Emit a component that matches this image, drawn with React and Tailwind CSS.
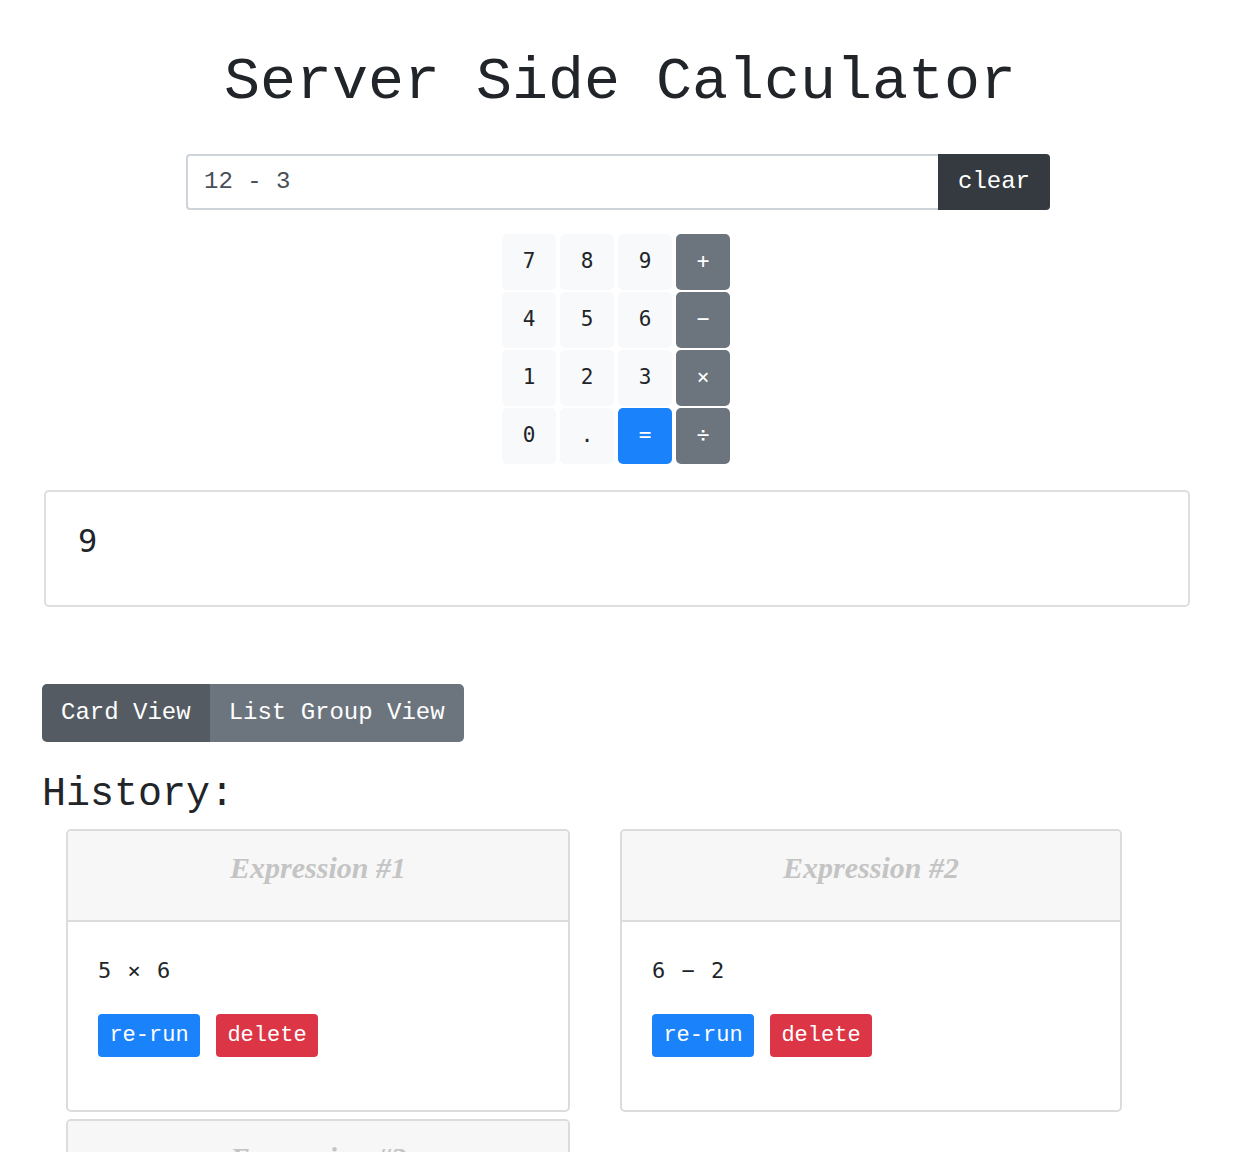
const MONO = "font-['Liberation_Mono','Courier_New',monospace]";
const DJ = "font-['DejaVu_Sans_Mono',monospace]";

const keys = [
  ["7", "8", "9", "+"],
  ["4", "5", "6", "−"],
  ["1", "2", "3", "×"],
  ["0", ".", "=", "÷"],
];
const cards = [
  { n: 1, expr: "5 × 6", w: "w-[504px]" },
  { n: 2, expr: "6 − 2", w: "w-[502px]" },
  { n: 3, expr: "9 + 1", w: "w-[504px]" },
];

function Key({ k, col }) {
  const isEq = k === "=";
  const isOp = col === 3;
  const cls = isEq
    ? "bg-[#1a82fb] text-white"
    : isOp
    ? "bg-[#6c757d] text-white"
    : "bg-[#f8f9fa] text-[#212529]";
  return (
    <div className={`flex items-center justify-center rounded-[5px] text-[21px] font-['DejaVu_Sans_Mono',monospace] ${cls}`}>
      {k}
    </div>
  );
}

export default function App() {
  return (
    <div className="w-[1240px] min-h-[1152px] bg-white text-[#212529] overflow-hidden">
      <h1 className={`text-center text-[60px] leading-[1.2] pt-[46px] text-[#212529] ${MONO}`}>
        Server Side Calculator
      </h1>

      <div className="flex ml-[186px] w-[864px] h-[56px] mt-[36px]">
        <div className={`flex-1 flex items-center border-2 border-[#ced4da] border-r-0 rounded-l-[4px] pl-[16px] text-[24px] text-[#495057] ${MONO}`}>
          12 - 3
        </div>
        <button className={`w-[112px] bg-[#343a40] text-white text-[24px] rounded-r-[4px] ${MONO}`}>
          clear
        </button>
      </div>

      <div className="ml-[502px] mt-[24px] grid grid-cols-[repeat(4,54px)] grid-rows-[repeat(4,56px)] gap-x-[4px] gap-y-[2px] w-[228px]">
        {keys.flat().map((k, i) => (
          <Key key={i} k={k} col={i % 4} />
        ))}
      </div>

      <div className={`ml-[44px] w-[1146px] h-[117px] mt-[26px] border-2 border-[#dedede] rounded-[5px] px-[32px] pt-[25px] text-[32px] leading-[1.5] text-[#212529] ${DJ}`}>
        9
      </div>

      <div className={`flex ml-[42px] mt-[77px] h-[58px] w-fit rounded-[5px] overflow-hidden text-white text-[24px] ${MONO}`}>
        <div className="bg-[#545b62] px-[19px] flex items-center">Card View</div>
        <div className="bg-[#6c757d] px-[19px] flex items-center">List Group View</div>
      </div>

      <h2 className={`ml-[42px] mt-[29px] text-[40px] leading-[1.2] text-[#212529] ${MONO}`}>
        History:
      </h2>

      <div className="ml-[66px] mt-[10px] w-[1100px] flex flex-wrap gap-x-[50px] gap-y-[7px]">
        {cards.map((c) => (
          <div
            key={c.n}
            className={`${c.w} h-[283px] border-2 border-[#dcdcdc] rounded-[5px] overflow-hidden flex flex-col`}
          >
            <div className="h-[91px] shrink-0 bg-[#f7f7f7] border-b-2 border-[#dcdcdc] text-center pt-[14px] text-[30px] leading-[1.5] font-bold italic text-[#c4c4c4] font-['Liberation_Serif','Times_New_Roman',serif]">
              Expression #{c.n}
            </div>
            <div className="px-[30px] pt-[32px]">
              <div className={`text-[22px] leading-[1.5] tracking-[1.5px] text-[#212529] ${DJ}`}>
                {c.expr}
              </div>
              <div className="flex gap-[16px] mt-[27px]">
                <button className={`w-[102px] h-[43px] rounded-[4px] bg-[#1a82fb] text-white text-[22px] ${MONO}`}>
                  re-run
                </button>
                <button className={`w-[102px] h-[43px] rounded-[4px] bg-[#dc3545] text-white text-[22px] ${MONO}`}>
                  delete
                </button>
              </div>
            </div>
          </div>
        ))}
      </div>
    </div>
  );
}
